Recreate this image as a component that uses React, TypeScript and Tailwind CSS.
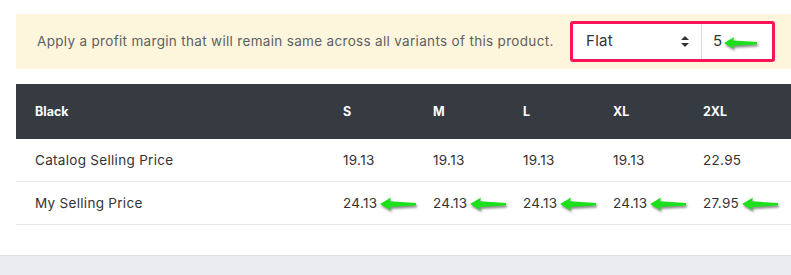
import React from "react";

const GreenArrow = ({ w = 36 }: { w?: number }) => (
  <svg
    width={w}
    height={14}
    viewBox="0 0 36 14"
    className="drop-shadow-[1px_2px_1px_rgba(0,0,0,0.45)]"
  >
    <polygon points="0,7 11,0.5 10,4.3 36,6 36,8.6 10,10 11,13.5" fill="#1de01d" />
  </svg>
);

const sizes = ["S", "M", "L", "XL", "2XL"];
const catalog = ["19.13", "19.13", "19.13", "19.13", "22.95"];
const mine = ["24.13", "24.13", "24.13", "24.13", "27.95"];

const cols = "grid grid-cols-[309px_90px_90px_90px_90px_90px_1fr]";

const App = () => {
  return (
    <div className="w-[791px] h-[275px] bg-white overflow-hidden flex flex-col font-['Inter',sans-serif]">
      <div className="pt-[14px] pl-4 flex flex-col">
        {/* margin banner */}
        <div className="h-[55px] bg-[#fdf6dc] flex items-center justify-between pl-[21px] pr-4">
          <p className="text-[13.5px] text-[#5d5f63] tracking-[0.32px]">
            Apply a profit margin that will remain same across all variants of this product.
          </p>
          <div className="w-[205px] h-[41px] border-[3px] border-[#fb1458] rounded-[3px] bg-white flex">
            <div className="w-[129px] flex items-center justify-between pl-[13px] pr-[12px] border-r border-[#dcdcdc]">
              <span className="text-[15px] text-[#333] tracking-[0.3px]">Flat</span>
              <svg width="8" height="11" viewBox="0 0 8 11">
                <polygon points="4,0 8,4 0,4" fill="#333" />
                <polygon points="0,7 8,7 4,11" fill="#333" />
              </svg>
            </div>
            <div className="flex-1 flex items-center pl-[11px]">
              <span className="text-[15px] text-[#333]">5</span>
              <span className="ml-[2px] mt-[2px]">
                <GreenArrow w={33} />
              </span>
            </div>
          </div>
        </div>

        {/* price table */}
        <div className="mt-[15px]">
          <div className={`${cols} h-[55px] items-center pt-[2px] bg-[#363a41] text-white text-[12.5px] font-bold`}>
            <div className="pl-[19px]">Black</div>
            {sizes.map((s) => (
              <div key={s} className="pl-[18px]">{s}</div>
            ))}
          </div>
          <div className={`${cols} h-[43px] items-center border-b border-[#e6e6e6] text-[13.5px] text-[#333] tracking-[0.3px]`}>
            <div className="pl-[19px]">Catalog Selling Price</div>
            {catalog.map((v, i) => (
              <div key={i} className="pl-[18px]">{v}</div>
            ))}
          </div>
          <div className={`${cols} h-[43px] items-center border-b border-[#e6e6e6] text-[13.5px] text-[#333] tracking-[0.3px]`}>
            <div className="pl-[19px]">My Selling Price</div>
            {mine.map((v, i) => (
              <div key={i} className="pl-[18px] flex items-center">
                <span>{v}</span>
                <span className="ml-[3px] mt-[2px]">
                  <GreenArrow />
                </span>
              </div>
            ))}
          </div>
        </div>
      </div>
      <div className="mt-[30px] flex-1 border-t border-[#dcdde0] bg-[#ebecef]" />
    </div>
  );
};

export default App;
